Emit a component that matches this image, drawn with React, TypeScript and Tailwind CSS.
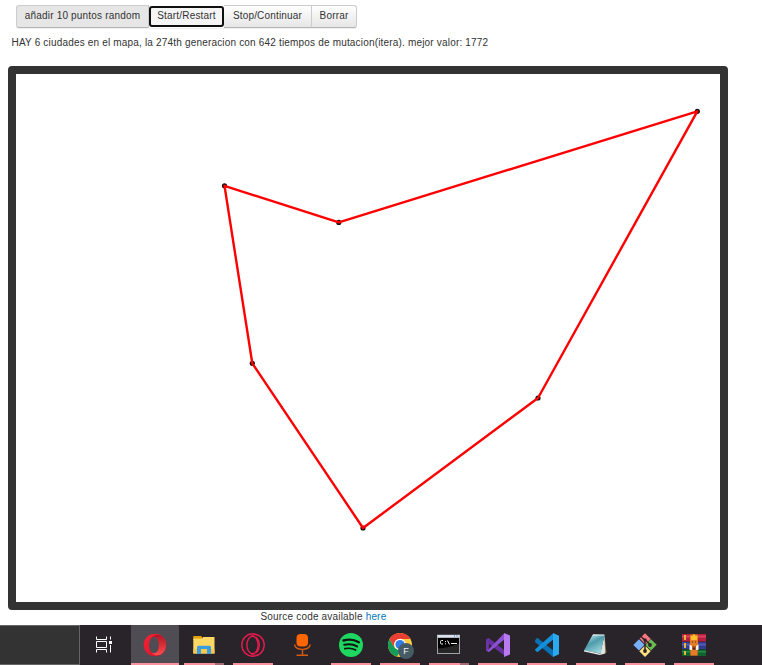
import React from "react";

const cities = [
  [208.5, 111.8], [322.8, 148.4], [681.3, 37.3], [522, 324], [347, 454], [236.3, 289.3],
];

const Svg = ({ children }: { children: React.ReactNode }) => (
  <svg className="block h-6 w-6 shrink-0" viewBox="0 0 24 24" fill="none">{children}</svg>
);

const TaskView = () => (
  <Svg>
    <path d="M4.5 3.500v3h10v-3M4.5 19.500v-3h10v3M4.5 8.5h10v6h-10zM18.5 3.500v3M18.5 12v7.500" stroke="#fff" />
    <path d="M17 8h3v3h-3z" fill="#fff" />
  </Svg>
);

const Opera = () => (
  <Svg>
    <defs>
      <linearGradient id="op" x1="0" x2="1" y2="1"><stop stopColor="#ff2035" /><stop offset="1" stopColor="#c9152a" /></linearGradient>
      <linearGradient id="op2" x1="0" x2="0" y2="1"><stop stopColor="#b01425" /><stop offset="1" stopColor="#ff4c4c" /></linearGradient>
    </defs>
    <path fill="url(#op)" fillRule="evenodd" d="M12 .7a11.3 11.3 0 1 0 0 22.6A11.3 11.3 0 0 0 12 .7ZM11.200 3.500c2.800 0 4.600 3.700 4.600 8.500s-1.800 8.500-4.600 8.500S6 16.700 6 12s2.400-8.500 5.200-8.500Z" />
    <path fill="url(#op2)" d="M8.500 4.500C11 1.500 14.500 1 17.800 2.400a11.300 11.300 0 0 1 0 19.200c-3.300 1.400-6.800.9-9.300-2.100 4.500 2.500 7.500-2 7.500-7.500S13 2 8.500 4.500Z" />
  </Svg>
);

const Folder = () => (
  <Svg>
    <path fill="#e3a008" d="M1.300 3H9l1 1v3H1.300z" />
    <path fill="#ffd863" d="M1.300 5.500H10L11 4H22.500v16.500H1.300z" />
    <path fill="#f9c84b" d="M1.300 16h21.200v4.500H1.300z" />
    <path fill="#3b9ce0" d="M5 13.700l1-1h12l1 1V21h-4v-5H9v5H5z" />
  </Svg>
);

const OperaGX = () => (
  <Svg>
    <g stroke="#e51b4d" strokeWidth="1.400">
      <circle cx="12" cy="12" r="11.200" />
      <ellipse cx="11.500" cy="12" rx="5.600" ry="8.800" />
      <path d="M9.500 3.500C13 1 17 1.500 20 4M9.500 20.500C13 23 17 22.500 20 20" strokeWidth="1" />
      <path d="M15 4.200c4.300 3.800 4.300 11.800 0 15.600" />
    </g>
  </Svg>
);

const Microphone = () => (
  <Svg>
    <rect x="6.500" y="1" width="11.500" height="12.500" rx="4" fill="#ff6500" />
    <path d="M4.500 11.500c1.200 6.500 14.500 6.500 15.700 0M12.500 16.500V22M6.500 22.300h11.500" stroke="#d65a10" strokeWidth="1.400" />
  </Svg>
);

const Spotify = () => (
  <Svg>
    <circle cx="12" cy="12" r="12" fill="#1ed760" />
    <g stroke="#0d160f" strokeLinecap="round">
      <path d="M4.500 7.500c5.500-1.500 11-.8 15.300 1.700" strokeWidth="2.400" />
      <path d="M5.200 11.800c4.600-1.200 9.200-.6 12.900 1.600" strokeWidth="2" />
      <path d="M5.800 15.700c3.900-.9 7.600-.5 10.800 1.400" strokeWidth="1.700" />
    </g>
  </Svg>
);

const Chrome = () => (
  <svg className="block h-6 w-6 shrink-0 overflow-visible" viewBox="0 0 24 24">
    <circle cx="12" cy="12" r="12" fill="#ffcd40" />
    <path fill="#109d58" d="M1.600 6 6.800 15l5.200 3-3 5.600A12 12 0 0 1 1.600 6Z" />
    <path fill="#ea3e32" d="M1.600 6a12 12 0 0 1 20.800 0H12a6 6 0 0 0-5.200 9Z" />
    <circle cx="12" cy="11.500" r="5.800" fill="#fff" />
    <circle cx="12" cy="11.500" r="4.600" fill="#327ee8" />
    <circle cx="18" cy="18" r="8" fill="#455b66" />
    <text x="18" y="21.300" fill="#f2f6f7" fontFamily="Liberation Sans" fontSize="9" textAnchor="middle">F</text>
  </svg>
);

const Terminal = () => (
  <Svg>
    <path fill="#9ea3aa" d="M0 1.700h23v19.300H0z" />
    <path fill="#dce2ec" d="M.5 2h22v2.300H.5z" />
    <path fill="#000" d="M1 5h21v15H1z" />
    <path fill="#262626" d="M1 15.500c7-.5 14-2 21-5V20H1z" />
    <path d="M6 7.500H4.500q-1 0-1 1.200v1.100q0 1.200 1 1.200H6M8.500 8v1M8.500 10.300v1M10.500 7.500l2 4M14 10.500h6" stroke="#eee" />
    <path fill="#3764ac" d="M17 2.500h1v1h-1zM19.500 2.500h1v1h-1z" />
  </Svg>
);

const VisualStudio = () => (
  <Svg>
    <path fill="#6930a2" d="M0 6.200 2.800 5 19 17.800V23L2.500 10.500v6L0 17.800z" />
    <path fill="#8c51d2" d="m0 17.800 2.500-1.300L18 .5v6.300L3 19z" />
    <path fill="#b87bef" d="M18 0 24 2.500v19L18 24z" />
    <path fill="#6e35aa" d="m0 6.200 2.800 4v6.300L0 17.800z" />
  </Svg>
);

const VSCode = () => (
  <Svg>
    <path fill="#0872b5" d="m0 7.300 2.300-2.500L18 17.300V24L0 9z" />
    <path fill="#168fda" d="m0 16.500 18-16v6.200L2.300 19.200 0 17z" />
    <path fill="#2ba9ee" d="m18 0 6 2.700v18.600L18 24z" />
  </Svg>
);

const Notepad = () => (
  <Svg>
    <defs><linearGradient id="note" x1=".2" y1="0" x2=".8" y2="1"><stop stopColor="#c5e9ec" /><stop offset=".4" stopColor="#4c9bac" /><stop offset="1" stopColor="#a9dfe2" /></linearGradient></defs>
    <path fill="#8c7446" d="m20.500 3 2 16.500-2 1z" />
    <path fill="#dce4e2" d="m20.500 2 .7 18.500L16 22z" />
    <path fill="url(#note)" d="M8.500 2h12l-4 18.500L0 17.500z" />
    <path fill="#edf3ef" d="m0 17.300 16.500 3.500-.5 1.300L0 18.500zM9 1.200l11.500.2v1H8.500z" />
  </Svg>
);

const Git = () => (
  <Svg>
    <path fill="#ff7881" d="m12 .3 5.800 5.800-5.300 5.300L6.700 5.600z" />
    <path fill="#79aef8" d="m6 6.200 5.500 5.500L6 17.500.3 12z" />
    <path fill="#6cbd50" d="m18 6.200 5.700 5.600-5.700 5.700-5.500-5.500z" />
    <path fill="#ffe181" d="m12 12.500 5.700 5.700-5.700 5.700-5.700-5.700z" />
    <path d="m8 3.500 4 4V18M12 6.500l5.500 5.500" stroke="#29242a" strokeWidth="1.500" />
    <circle cx="12" cy="7" r="1.700" fill="#29242a" /><circle cx="17" cy="12" r="1.900" fill="#29242a" /><circle cx="12" cy="18" r="1.900" fill="#29242a" />
  </Svg>
);

const WinRar = () => (
  <Svg>
    <path fill="#b91f3e" d="M0 1h24v7.500H0z" /><path fill="#d94360" d="M0 2.500h24v2H0z" />
    <path fill="#343c91" d="M0 9h24v7H0z" /><path fill="#535cb0" d="M0 10.500h24v2H0z" />
    <path fill="#11632e" d="M0 16.500h24v6.500H0z" /><path fill="#218d48" d="M0 18h24v1.500H0z" />
    <path fill="#e4b637" d="M2 2h2v5H2zM2 10h2v5H2zM2 18h2v4H2z" />
    <path fill="#b85b20" d="M8.500 1h7v22h-7z" /><path fill="#ffbf28" d="m8.500 2 1.500 1 2-2 2 2 1.500-1v5h-7z" />
    <path fill="#e47b26" d="M8 7h8v6H8zM8.500 17h7v5h-7z" /><path fill="#f5f0e8" d="M7.500 11.500 10 13v4H7.500zM14 13l2.500-1.500V17H14z" />
    <path fill="#412725" d="M10 8.500h1v1h-1zM13 8.500h1v1h-1zM11 14.500h2v2h-2z" />
  </Svg>
);

const tasks = [
  { name: "Opera", Icon: Opera, kind: "active" },
  { name: "Explorer", Icon: Folder, kind: "stacked" },
  { name: "Opera GX", Icon: OperaGX, kind: "open" },
  { name: "Microphone", Icon: Microphone, kind: "idle" },
  { name: "Spotify", Icon: Spotify, kind: "open" },
  { name: "Chrome", Icon: Chrome, kind: "open" },
  { name: "Terminal", Icon: Terminal, kind: "stacked" },
  { name: "Visual Studio", Icon: VisualStudio, kind: "open" },
  { name: "Visual Studio Code", Icon: VSCode, kind: "open" },
  { name: "Notepad", Icon: Notepad, kind: "open" },
  { name: "Git", Icon: Git, kind: "open" },
  { name: "WinRAR", Icon: WinRar, kind: "open" },
];

export default function App() {
  return (
    <main className="flex h-[665px] w-[762px] flex-col overflow-hidden bg-white font-['Liberation_Sans',sans-serif] text-[10px] leading-[14px] tracking-[0.18px] text-[#333]">
      <div className="ml-4 mt-[5px] flex h-[23px] w-[341px] shrink-0 rounded-[3px] text-[#333] shadow-[0_1px_1px_#00000012]">
        <button className="w-[133px] rounded-l-[3px] border border-[#ccc] border-b-[#b3b3b3] bg-[#e6e6e6] pb-[2px] whitespace-nowrap">añadir 10 puntos random</button>
        <button className="z-10 my-px w-[75px] rounded-[3px] border-2 border-[#101010] bg-[#f5f5f5] pb-[2px] whitespace-nowrap">Start/Restart</button>
        <button className="w-[88px] border-y border-r border-[#ccc] border-b-[#b3b3b3] bg-linear-to-b from-white to-[#e6e6e6] pb-[2px] whitespace-nowrap">Stop/Continuar</button>
        <button className="w-[45px] rounded-r-[3px] border-y border-r border-[#ccc] border-b-[#b3b3b3] bg-linear-to-b from-white to-[#e6e6e6] pb-[2px]">Borrar</button>
      </div>
      <p className="ml-[11.5px] mt-2 h-[14px] shrink-0 whitespace-nowrap">HAY 6 ciudades en el mapa, la 274th generacion con 642 tiempos de mutacion(itera). mejor valor: 1772</p>
      <div className="ml-2 mt-4 h-[544px] w-[720px] shrink-0 rounded-[4px] border-8 border-[#333] bg-white">
        <svg className="block h-[528px] w-[704px]" viewBox="0 0 704 528">
          {cities.map(([x, y]) => <circle key={x} cx={x} cy={y} r="2.600" fill="#111" />)}
          <polygon points={cities.map((p) => p.join(",")).join(" ")} fill="none" stroke="#f00" strokeWidth="2.400" strokeLinejoin="round" />
        </svg>
      </div>
      <footer className="ml-[260.5px] h-[15px] shrink-0 whitespace-nowrap">Source code available <a className="text-[#0078b8]">here</a></footer>
      <nav className="flex h-10 shrink-0 bg-[#28242a]">
        <div className="h-10 w-20 border-y border-r border-[#656565] bg-[#333]" />
        <button aria-label="Task view" className="flex w-[51px] items-center pl-3"><TaskView /></button>
        <div className="flex gap-px">
          {tasks.map(({ name, Icon, kind }) => (
            <button key={name} aria-label={name} className={`flex h-10 w-12 flex-col items-center justify-between pt-2 ${kind === "active" ? "bg-[#504c53]" : ""}`}>
              <Icon />
              <span className={`flex h-0.5 justify-end ${kind === "active" ? "w-12" : "w-10"} ${kind === "idle" ? "" : "bg-[#fa929e]"}`}>
                {kind === "stacked" && <i className="h-0.5 w-[9px] bg-[#a56b75]" />}
              </span>
            </button>
          ))}
        </div>
      </nav>
    </main>
  );
}
